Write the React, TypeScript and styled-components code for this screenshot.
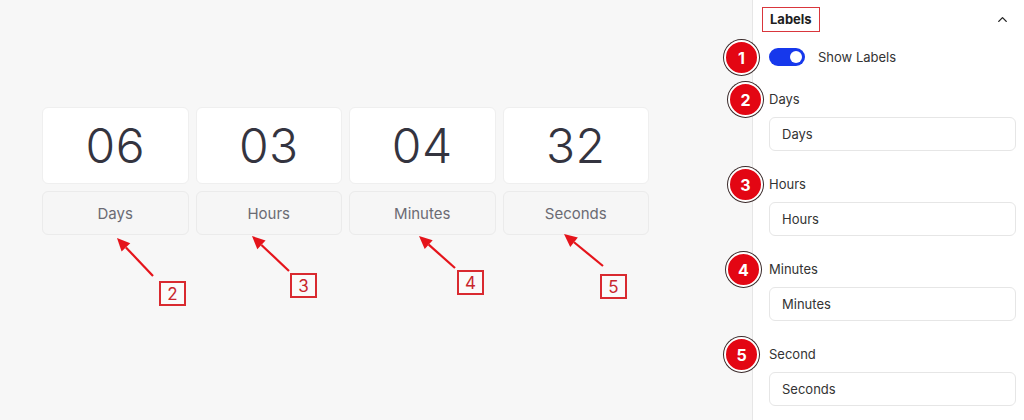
import React from "react";
import styled, { createGlobalStyle } from "styled-components";
import { ChevronUp } from "lucide-react";

const GlobalStyle = createGlobalStyle`
  html, body {
    margin: 0;
    padding: 0;
    background: #f7f7f7;
    font-family: Inter, "Noto Sans", "Liberation Sans", sans-serif;
  }
  * { box-sizing: border-box; }
`;

const Page = styled.div`
  display: flex;
  width: 1024px;
  height: 420px;
  overflow: hidden;
`;

/* ---------- preview canvas ---------- */

const Canvas = styled.div`
  position: relative;
  flex: 0 0 752px;
  padding: 107px 0 0 42px;
  background: #f7f7f7;
`;

const Countdown = styled.div`
  display: grid;
  grid-template-columns: repeat(4, 146.5px);
  column-gap: 7px;
  row-gap: 7px;
`;

const Unit = styled.div`
  display: grid;
  grid-template-rows: 77px 44px;
  row-gap: 7px;
`;

const ValueCard = styled.div`
  display: flex;
  align-items: center;
  justify-content: center;
  background: #ffffff;
  border: 1px solid #efefef;
  border-radius: 6px;
  font-size: 48px;
  font-weight: 300;
  color: #34343f;
  letter-spacing: 0.5px;
`;

const LabelCard = styled.div`
  display: flex;
  align-items: center;
  justify-content: center;
  background: #f6f6f6;
  border: 1px solid #ebebeb;
  border-radius: 6px;
  font-size: 15px;
  color: #6b6b73;
`;

const ArrowLayer = styled.svg`
  position: absolute;
  left: 0;
  top: 0;
  width: 752px;
  height: 420px;
  pointer-events: none;
`;

const Callout = styled.div<{ $x: number; $y: number }>`
  position: absolute;
  left: ${(p) => p.$x}px;
  top: ${(p) => p.$y}px;
  width: 27px;
  height: 25px;
  display: flex;
  align-items: center;
  justify-content: center;
  border: 2px solid #d92a30;
  background: #fafafa;
  color: #c9262c;
  font-size: 17px;
  font-weight: 400;
`;

/* ---------- settings sidebar ---------- */

const Sidebar = styled.aside`
  flex: 1;
  background: #ffffff;
  border-left: 1px solid #e6e6e6;
  padding: 0 8px 0 16px;
  display: flex;
  flex-direction: column;
`;

const SectionHeader = styled.div`
  height: 38px;
  display: flex;
  align-items: center;
  justify-content: space-between;
  padding-right: 6px;
  color: #222;
`;

const SectionTitle = styled.span`
  margin-left: -7px;
  padding: 3px 7px 4px;
  border: 1px solid #d9363c;
  font-size: 13px;
  font-weight: 700;
  color: #1e1e1e;
`;

const Fields = styled.div`
  display: flex;
  flex-direction: column;
  gap: 24px;
  padding-top: 10px;
`;

const Field = styled.div`
  position: relative;
  display: flex;
  flex-direction: column;
  gap: 9px;
`;

const ToggleRow = styled.div`
  position: relative;
  display: flex;
  align-items: center;
  gap: 13px;
  height: 18px;
  font-size: 13px;
  color: #333;
`;

const Switch = styled.span`
  position: relative;
  width: 36px;
  height: 18px;
  border-radius: 9px;
  background: #1638ec;
  flex: 0 0 auto;
  &::after {
    content: "";
    position: absolute;
    right: 3px;
    top: 3px;
    width: 12px;
    height: 12px;
    border-radius: 50%;
    background: #ffffff;
  }
`;

const FieldLabel = styled.span`
  height: 18px;
  line-height: 18px;
  font-size: 13px;
  color: #333;
`;

const TextInput = styled.div`
  height: 34px;
  display: flex;
  align-items: center;
  padding-left: 12px;
  border: 1px solid #e6e6e6;
  border-radius: 6px;
  font-size: 13px;
  color: #333;
  background: #fff;
`;

const Badge = styled.span<{ $dx: number; $dy: number }>`
  position: absolute;
  left: ${(p) => p.$dx}px;
  top: ${(p) => p.$dy}px;
  width: 35px;
  height: 35px;
  border-radius: 50%;
  background: #e30613;
  border: 2px solid #ffffff;
  box-shadow: 0 0 0 1px #3a2a2a;
  color: #fff;
  font-size: 16px;
  font-weight: 700;
  display: flex;
  align-items: center;
  justify-content: center;
  z-index: 2;
`;

const units = [
  { value: "06", label: "Days" },
  { value: "03", label: "Hours" },
  { value: "04", label: "Minutes" },
  { value: "32", label: "Seconds" },
];

const arrows = [
  { tip: [117, 238], tail: [153, 276], box: [159, 281], n: "2" },
  { tip: [252, 236], tail: [289, 271], box: [290, 273], n: "3" },
  { tip: [419, 236], tail: [455, 268], box: [457, 270], n: "4" },
  { tip: [564, 234], tail: [603, 266], box: [600, 274], n: "5" },
];

const fields = [
  { n: "2", title: "Days", value: "Days", dx: -41 },
  { n: "3", title: "Hours", value: "Hours", dx: -41 },
  { n: "4", title: "Minutes", value: "Minutes", dx: -43 },
  { n: "5", title: "Second", value: "Seconds", dx: -45 },
];

function Arrow({ tip, tail }: { tip: number[]; tail: number[] }) {
  const [tx, ty] = tip;
  const [sx, sy] = tail;
  const ang = Math.atan2(ty - sy, tx - sx);
  const len = 13;
  const half = 6;
  const bx = tx - Math.cos(ang) * len;
  const by = ty - Math.sin(ang) * len;
  const px = -Math.sin(ang) * half;
  const py = Math.cos(ang) * half;
  return (
    <g>
      <line x1={sx} y1={sy} x2={bx} y2={by} stroke="#e5141b" strokeWidth={2.2} />
      <polygon
        points={`${tx},${ty} ${bx + px},${by + py} ${bx - px},${by - py}`}
        fill="#e5141b"
      />
    </g>
  );
}

export default function App() {
  return (
    <>
      <GlobalStyle />
      <Page>
        <Canvas>
          <Countdown>
            {units.map((u) => (
              <Unit key={u.label}>
                <ValueCard>{u.value}</ValueCard>
                <LabelCard>{u.label}</LabelCard>
              </Unit>
            ))}
          </Countdown>
          <ArrowLayer viewBox="0 0 752 420">
            {arrows.map((a) => (
              <Arrow key={a.n} tip={a.tip} tail={a.tail} />
            ))}
          </ArrowLayer>
          {arrows.map((a) => (
            <Callout key={a.n} $x={a.box[0]} $y={a.box[1]}>
              {a.n}
            </Callout>
          ))}
        </Canvas>
        <Sidebar>
          <SectionHeader>
            <SectionTitle>Labels</SectionTitle>
            <ChevronUp size={15} strokeWidth={2.2} />
          </SectionHeader>
          <Fields>
            <ToggleRow>
              <Badge $dx={-45} $dy={-8}>1</Badge>
              <Switch />
              <span>Show Labels</span>
            </ToggleRow>
            {fields.map((f) => (
              <Field key={f.n}>
                <Badge $dx={f.dx} $dy={-8}>{f.n}</Badge>
                <FieldLabel>{f.title}</FieldLabel>
                <TextInput>{f.value}</TextInput>
              </Field>
            ))}
          </Fields>
        </Sidebar>
      </Page>
    </>
  );
}
